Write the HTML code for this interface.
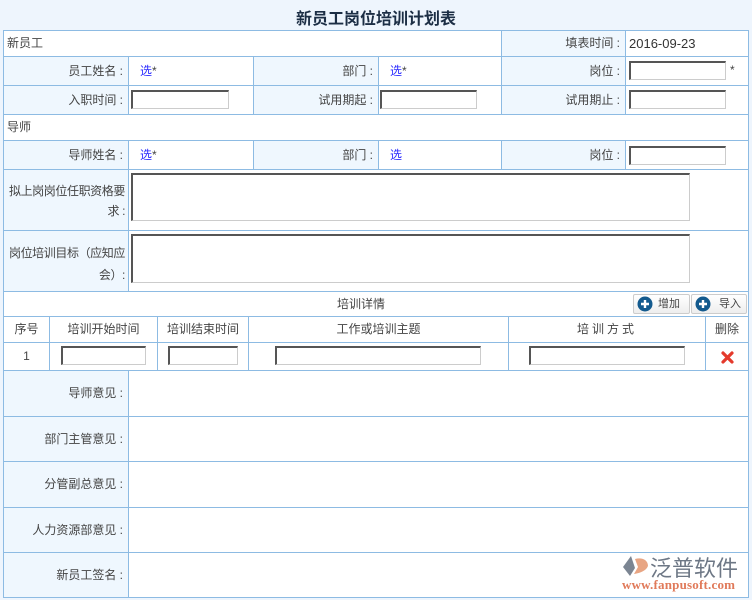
<!DOCTYPE html>
<html><head><meta charset="utf-8"><style>
*{margin:0;padding:0;box-sizing:border-box}
body{width:752px;height:600px;background:#eef5fd;font-family:"Liberation Sans","Noto Sans CJK SC",sans-serif;font-size:12px;color:#444;position:relative;overflow:hidden}
.a{position:absolute}
.c{position:absolute;border:1px solid #8dbbe3;background:#fff}
.l{background:#eff7fe;text-align:right;padding-right:5px}
.i{position:absolute;background:#fff;border:1px solid #ccc;border-top:2px solid #555;border-left:2px solid #555;height:19px}
.s{color:#2a2aff}
.w{letter-spacing:-0.4px}
</style></head><body>
<div class="a" style="left:0;top:5px;width:752px;text-align:center;font-size:16px;font-weight:bold;color:#1c2e45">新员工岗位培训计划表</div>

<div class="c" style="left:3px;top:30px;width:499px;height:27px;line-height:25px;padding-left:3px">新员工</div>
<div class="c l" style="left:501px;top:30px;width:125px;height:27px;line-height:25px">填表时间 :</div>
<div class="c" style="left:625px;top:30px;width:124px;height:27px;line-height:25px;padding-left:3px;font-size:13px;color:#333">2016-09-23</div>

<div class="c l" style="left:3px;top:56px;width:126px;height:30px;line-height:28px">员工姓名 :</div>
<div class="c" style="left:128px;top:56px;width:126px;height:30px;line-height:28px;padding-left:11px"><span class="s">选</span>*</div>
<div class="c l" style="left:253px;top:56px;width:126px;height:30px;line-height:28px">部门 :</div>
<div class="c" style="left:378px;top:56px;width:124px;height:30px;line-height:28px;padding-left:11px"><span class="s">选</span>*</div>
<div class="c l" style="left:501px;top:56px;width:125px;height:30px;line-height:28px">岗位 :</div>
<div class="c" style="left:625px;top:56px;width:124px;height:30px"></div>
<div class="i" style="left:629px;top:61px;width:97px"></div>
<div class="a" style="left:730px;top:63px">*</div>

<div class="c l" style="left:3px;top:85px;width:126px;height:30px;line-height:28px">入职时间 :</div>
<div class="c" style="left:128px;top:85px;width:126px;height:30px"></div>
<div class="i" style="left:131px;top:90px;width:98px"></div>
<div class="c l" style="left:253px;top:85px;width:126px;height:30px;line-height:28px">试用期起 :</div>
<div class="c" style="left:378px;top:85px;width:124px;height:30px"></div>
<div class="i" style="left:380px;top:90px;width:97px"></div>
<div class="c l" style="left:501px;top:85px;width:125px;height:30px;line-height:28px">试用期止 :</div>
<div class="c" style="left:625px;top:85px;width:124px;height:30px"></div>
<div class="i" style="left:629px;top:90px;width:97px"></div>

<div class="c" style="left:3px;top:114px;width:746px;height:27px;line-height:25px;padding-left:3px">导师</div>
<div class="c l" style="left:3px;top:140px;width:126px;height:30px;line-height:28px">导师姓名 :</div>
<div class="c" style="left:128px;top:140px;width:126px;height:30px;line-height:28px;padding-left:11px"><span class="s">选</span>*</div>
<div class="c l" style="left:253px;top:140px;width:126px;height:30px;line-height:28px">部门 :</div>
<div class="c" style="left:378px;top:140px;width:124px;height:30px;line-height:28px;padding-left:11px"><span class="s">选</span></div>
<div class="c l" style="left:501px;top:140px;width:125px;height:30px;line-height:28px">岗位 :</div>
<div class="c" style="left:625px;top:140px;width:124px;height:30px"></div>
<div class="i" style="left:629px;top:146px;width:97px"></div>

<div class="c l w" style="left:3px;top:169px;width:126px;height:62px;padding:11px 3px 0 0;line-height:20px">拟上岗岗位任职资格要求 :</div>
<div class="c" style="left:128px;top:169px;width:621px;height:62px"></div>
<div class="i" style="left:131px;top:173px;width:559px;height:48px"></div>
<div class="c l w" style="left:3px;top:230px;width:126px;height:62px;padding:11px 3px 0 0;line-height:22px">岗位培训目标（应知应会）:</div>
<div class="c" style="left:128px;top:230px;width:621px;height:62px"></div>
<div class="i" style="left:131px;top:234px;width:559px;height:49px"></div>

<div class="c" style="left:3px;top:291px;width:746px;height:26px;line-height:24px;text-align:center;padding-right:30px">培训详情</div>
<div class="a" style="left:633px;top:294px;width:57px;height:20px;border:1px solid #ccc;border-radius:2px;background:linear-gradient(#fff,#eee);line-height:18px;padding-left:24px;font-size:11px">增加</div>
<div class="a" style="left:691px;top:294px;width:56px;height:20px;border:1px solid #ccc;border-radius:2px;background:linear-gradient(#fff,#eee);line-height:18px;padding-left:27px;font-size:11px">导入</div>
<svg class="a" style="left:637px;top:296px" width="16" height="16"><circle cx="8" cy="8" r="7.5" fill="#135a8e"/><path d="M8 4v8M4 8h8" stroke="#fff" stroke-width="2.4"/></svg>
<svg class="a" style="left:695px;top:296px" width="16" height="16"><circle cx="8" cy="8" r="7.5" fill="#135a8e"/><path d="M8 4v8M4 8h8" stroke="#fff" stroke-width="2.4"/></svg>

<div class="c" style="left:3px;top:316px;width:47px;height:27px;line-height:25px;text-align:center">序号</div>
<div class="c" style="left:49px;top:316px;width:109px;height:27px;line-height:25px;text-align:center">培训开始时间</div>
<div class="c" style="left:157px;top:316px;width:92px;height:27px;line-height:25px;text-align:center">培训结束时间</div>
<div class="c" style="left:248px;top:316px;width:261px;height:27px;line-height:25px;text-align:center">工作或培训主题</div>
<div class="c" style="left:508px;top:316px;width:198px;height:27px;line-height:25px;text-align:center;letter-spacing:3px">培训方式</div>
<div class="c" style="left:705px;top:316px;width:44px;height:27px;line-height:25px;text-align:center">删除</div>
<div class="c" style="left:3px;top:342px;width:47px;height:29px;line-height:27px;text-align:center">1</div>
<div class="c" style="left:49px;top:342px;width:109px;height:29px"></div>
<div class="c" style="left:157px;top:342px;width:92px;height:29px"></div>
<div class="c" style="left:248px;top:342px;width:261px;height:29px"></div>
<div class="c" style="left:508px;top:342px;width:198px;height:29px"></div>
<div class="c" style="left:705px;top:342px;width:44px;height:29px"></div>
<div class="i" style="left:61px;top:346px;width:85px"></div>
<div class="i" style="left:168px;top:346px;width:70px"></div>
<div class="i" style="left:275px;top:346px;width:206px"></div>
<div class="i" style="left:529px;top:346px;width:156px"></div>
<svg class="a" style="left:721px;top:351px" width="13" height="13"><path d="M2 2L11 11M11 2L2 11" stroke="#e43a2c" stroke-width="3.2" stroke-linecap="round"/></svg>

<div class="c l" style="left:3px;top:370px;width:126px;height:47px;line-height:45px">导师意见 :</div>
<div class="c" style="left:128px;top:370px;width:621px;height:47px"></div>
<div class="c l" style="left:3px;top:416px;width:126px;height:46px;line-height:44px">部门主管意见 :</div>
<div class="c" style="left:128px;top:416px;width:621px;height:46px"></div>
<div class="c l" style="left:3px;top:461px;width:126px;height:47px;line-height:45px">分管副总意见 :</div>
<div class="c" style="left:128px;top:461px;width:621px;height:47px"></div>
<div class="c l" style="left:3px;top:507px;width:126px;height:46px;line-height:44px">人力资源部意见 :</div>
<div class="c" style="left:128px;top:507px;width:621px;height:46px"></div>
<div class="c l" style="left:3px;top:552px;width:126px;height:46px;line-height:44px">新员工签名 :</div>
<div class="c" style="left:128px;top:552px;width:621px;height:46px"></div>

<svg class="a" style="left:622px;top:555px" width="28" height="22"><path d="M9 1L1 12L8 21L13 13Z" fill="#7b8592"/><path d="M13 4C20 2 26 5 26 11C24 16 18 18 12 19L16 12Z" fill="#e8a583"/></svg>
<div class="a" style="left:650px;top:551px;font-size:22px;color:#6d7785">泛普软件</div>
<div class="a" style="left:622px;top:577px;font-family:'Liberation Serif',serif;font-size:13px;font-weight:bold;color:#e07a5a;letter-spacing:0.2px">www.fanpusoft.com</div>
</body></html>
